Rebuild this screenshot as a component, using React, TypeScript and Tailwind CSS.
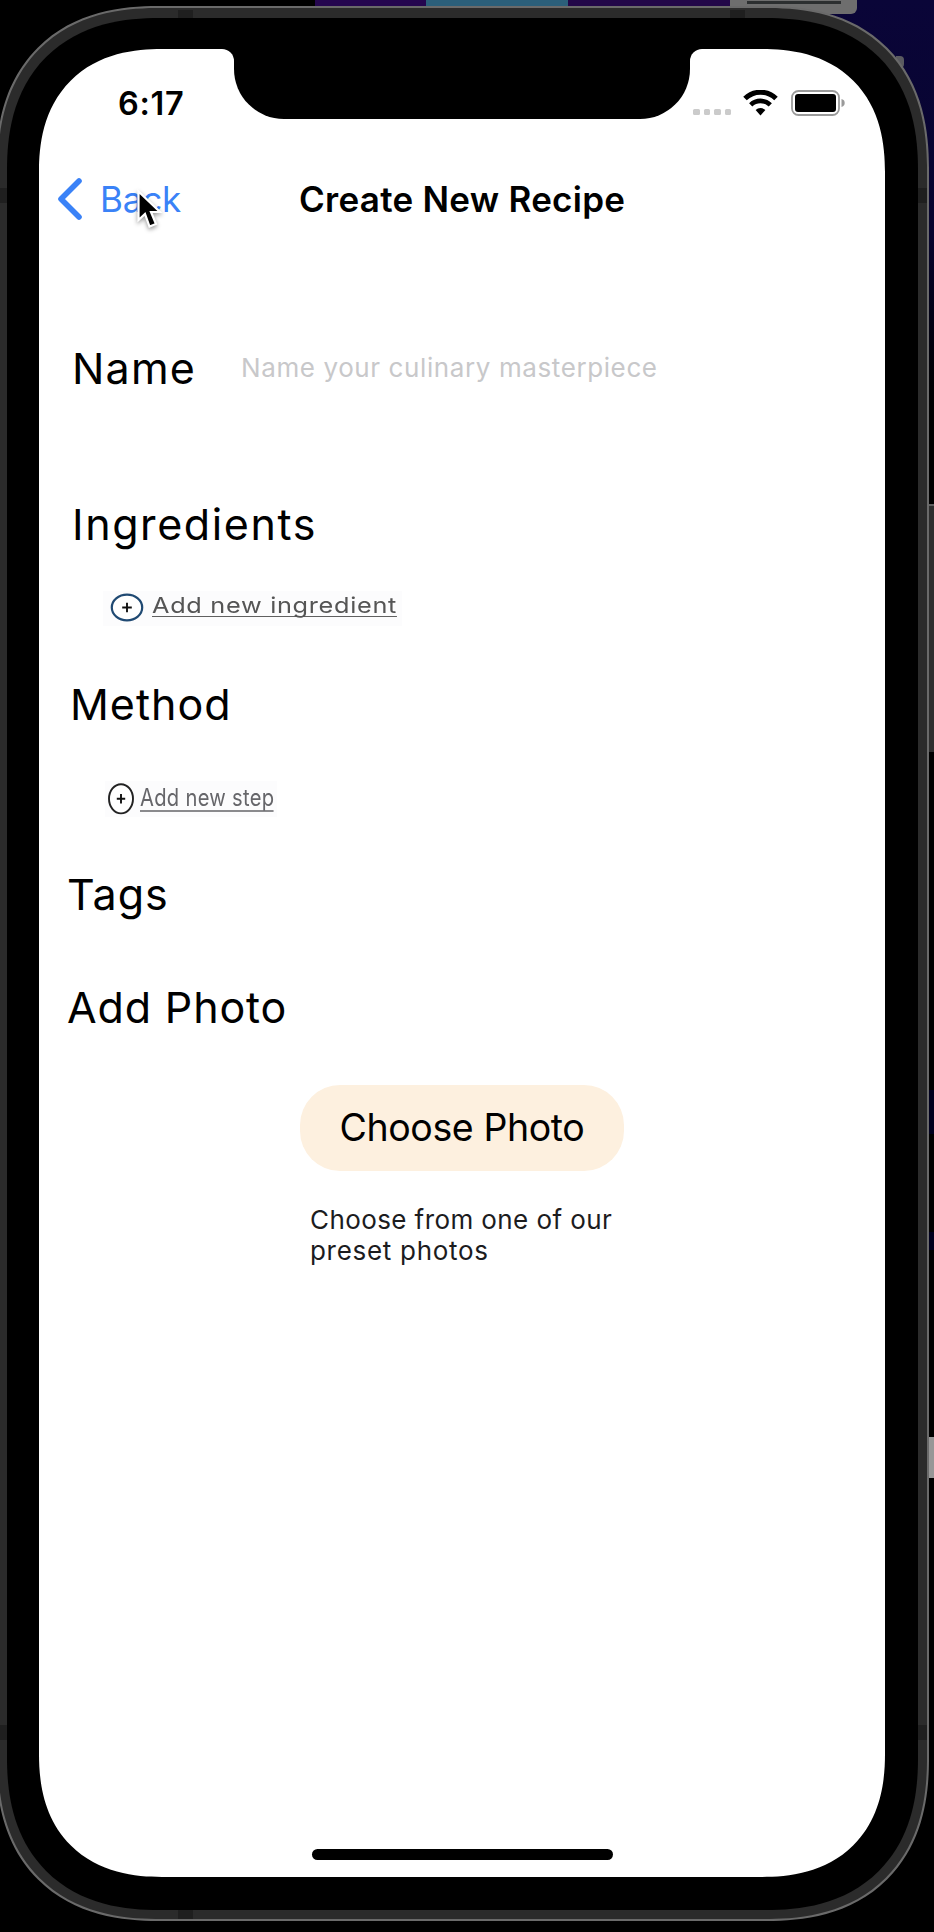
import type { ReactNode } from 'react';

function Wallpaper() {
  return (
    <div className="absolute inset-0 overflow-hidden bg-black">
      <div className="absolute top-0 right-0 h-[470px] w-[120px] bg-linear-to-b from-[#0a0538] via-[#07042e] to-black" />
      <div className="absolute top-0 left-[315px] flex h-2">
        <div className="w-[111px] bg-[#25064f]" />
        <div className="w-[142px] bg-[#2b5f7a]" />
        <div className="w-[170px] bg-[#220748]" />
      </div>
      <div className="absolute top-0 left-[730px] h-[14px] w-[127px] rounded-b-md bg-[#6e6e6e]">
        <div className="mx-auto mt-px h-[3px] w-[94px] bg-[#2c2f30]" />
      </div>
      <div className="absolute top-[56px] left-[896px] h-3 w-2 rounded-r-sm bg-[#5a5a60]" />
      <div className="absolute top-[504px] right-0 h-[248px] w-2 border-t-2 border-[#606060] bg-[#2e2e2e]" />
      <div className="absolute top-[1090px] right-0 h-[44px] w-2 bg-[#00001e]" />
      <div className="absolute top-[1232px] right-0 h-[18px] w-2 bg-[#00001e]" />
      <div className="absolute top-[1437px] right-0 h-[41px] w-2 bg-[#979797]" />
    </div>
  );
}

function AntennaBands() {
  return (
    <>
      <div className="absolute top-[2px] left-[180px] h-[9px] w-[15px] bg-[#1f1f1f]" />
      <div className="absolute top-[2px] left-[732px] h-[9px] w-[15px] bg-[#1f1f1f]" />
      <div className="absolute bottom-0 left-[180px] h-[9px] w-[15px] bg-[#1f1f1f]" />
      <div className="absolute top-[180px] left-0 h-[15px] w-[9px] bg-[#1f1f1f]" />
      <div className="absolute top-[180px] right-0 h-[15px] w-[9px] bg-[#1f1f1f]" />
      <div className="absolute bottom-[179px] left-0 h-[15px] w-[9px] bg-[#1f1f1f]" />
      <div className="absolute bottom-[179px] right-0 h-[15px] w-[9px] bg-[#1f1f1f]" />
    </>
  );
}

function Notch() {
  return (
    <div className="absolute top-0 left-[183px] flex">
      <div className="h-[14px] w-[12px] bg-black">
        <div className="size-full rounded-tr-[12px] bg-white" />
      </div>
      <div className="h-[70px] w-[456px] rounded-b-[50px] bg-black" />
      <div className="h-[14px] w-[12px] bg-black">
        <div className="size-full rounded-tl-[12px] bg-white" />
      </div>
    </div>
  );
}

function StatusBar() {
  return (
    <div className="flex h-[108px] shrink-0 items-center justify-between pr-10 pl-[79px]">
      <span className="pt-0.5 text-[32.5px] font-semibold tracking-[0.7px]">6:17</span>
      <div className="flex h-[26px] items-end">
        <div className="mr-3 flex gap-1 pb-px">
          <i className="size-[6.4px] rounded-[1.5px] bg-[#cbcbcb]" />
          <i className="size-[6.4px] rounded-[1.5px] bg-[#cbcbcb]" />
          <i className="size-[6.4px] rounded-[1.5px] bg-[#cbcbcb]" />
          <i className="size-[6.4px] rounded-[1.5px] bg-[#cbcbcb]" />
        </div>
        <svg className="mr-[13px] h-[26px] w-[35px]" viewBox="0 0 35 26" fill="none" stroke="#000">
          <path d="M2 8.6a22 22 0 0 1 31 0" strokeWidth="5" />
          <path d="M7.7 14.8a14.2 14.2 0 0 1 19.6 0" strokeWidth="4.6" />
          <path d="M12.6 20a7.2 7.2 0 0 1 9.8 0l-4.900 5.400z" fill="#000" stroke="none" />
        </svg>
        <svg className="h-[26px] w-[54px]" viewBox="0 0 54 26" fill="none">
          <rect x="1" y="1" width="47" height="24" rx="6.5" stroke="#9a9a9a" strokeWidth="1.8" />
          <rect x="4" y="4" width="41" height="18" rx="3" fill="#000" />
          <path d="M50.5 9c2.6.8 3.2 2.200 3.200 4s-.6 3.200-3.200 4z" fill="#9a9a9a" />
        </svg>
      </div>
    </div>
  );
}

function NavBar() {
  return (
    <nav className="flex h-[84px] shrink-0 items-center pl-[19px] text-[35px]">
      <svg className="mr-[18px] h-[42px] w-6" viewBox="0 0 24 42" fill="none">
        <path d="M21 3 3 21l18 18" stroke="#3a82f7" strokeWidth="5.6" strokeLinecap="round" strokeLinejoin="round" />
      </svg>
      <a className="w-[199px] tracking-[-0.15px] text-[#3a82f7]">Back</a>
      <h1 className="font-semibold tracking-[0.27px]">Create New Recipe</h1>
    </nav>
  );
}

function Heading({ className, children }: { className: string; children: ReactNode }) {
  return <h2 className={`shrink-0 text-[43px] leading-[52px] ${className}`}>{children}</h2>;
}

function Cursor() {
  return (
    <svg
      className="absolute top-[139px] left-[96px] h-[46px] w-[32px] drop-shadow-[0_2px_2px_rgba(0,0,0,0.4)]"
      viewBox="0 0 32 46"
    >
      <path
        d="M3.500 3.500v28.500l6.500-6 4.500 12.500 6.500-2.500-5-12h9z"
        fill="#000"
        stroke="#fff"
        strokeWidth="2.200"
      />
    </svg>
  );
}

export default function App() {
  return (
    <div className="relative h-[1932px] w-[934px] overflow-hidden bg-black pt-[6px] font-['Inter',sans-serif] text-black">
      <Wallpaper />
      <div className="relative -ml-1 h-[1915px] w-[933px] rounded-[162px] border-2 border-[#6a6a6a] bg-[#2b2b2b] pt-[10px] pr-[9px] pb-[9px] pl-[9px] [corner-shape:superellipse(1.22)]">
        <AntennaBands />
        <div className="relative h-full rounded-[152px] bg-black pt-[31px] pr-[33px] pb-[33px] pl-[32px] [corner-shape:superellipse(1.22)]">
          <div className="relative flex h-full flex-col overflow-hidden rounded-[123px] bg-white [corner-shape:superellipse(1.22)]">
            <StatusBar />
            <NavBar />

            <div className="mt-[101px] ml-[33px] flex h-[52px] shrink-0 items-center">
              <Heading className="w-[169px] tracking-[1.2px]">Name</Heading>
              <span className="pb-px text-[26px] tracking-[0.6px] text-[#c8c8ca]">
                Name your culinary masterpiece
              </span>
            </div>

            <Heading className="mt-[104px] ml-[33px] tracking-[1.6px]">Ingredients</Heading>
            <button className="mt-[41px] ml-16 flex h-[35px] w-[299px] shrink-0 bg-[#fcfcfd] pt-0.5 pl-[7px] text-left">
              <svg className="h-[29px] w-[34px] shrink-0" viewBox="0 0 34 29" fill="none">
                <ellipse cx="17" cy="14.500" rx="15.200" ry="12.800" fill="#fff" stroke="#204a73" strokeWidth="2.200" />
                <path d="M17 9.700v9.600M12.200 14.500h9.600" stroke="#111" strokeWidth="1.900" />
              </svg>
              <span className="ml-[8px] h-[24px] w-[213px] shrink-0 origin-left scale-x-115 border-b border-[#606060] text-[22px] leading-[24px] tracking-[0.6px] whitespace-nowrap text-[#555]">
                Add new ingredient
              </span>
            </button>

            <Heading className="mt-[52px] ml-[31px] tracking-[1px]">Method</Heading>
            <button className="mt-[51px] ml-[66px] flex h-9 w-[172px] shrink-0 bg-[#fcfcfd] pt-px pl-[2px] text-left">
              <svg className="h-[33px] w-[28px] shrink-0" viewBox="0 0 28 33" fill="none">
                <ellipse cx="14" cy="16.800" rx="12" ry="14.600" fill="#fff" stroke="#222" strokeWidth="1.900" />
                <path d="M14 12v9.600M9.800 16.800h8.400" stroke="#111" strokeWidth="1.900" />
              </svg>
              <span className="ml-[5px] h-[30px] w-[159px] shrink-0 origin-left scale-x-84 border-b-2 border-[#8a8a8d] pt-px text-[24px] leading-[29px] tracking-[0.35px] whitespace-nowrap text-[#66666a]">
                Add new step
              </span>
            </button>

            <Heading className="mt-[51px] ml-[28px] tracking-[1px]">Tags</Heading>
            <Heading className="mt-[61px] ml-[28px] tracking-[0.85px]">Add Photo</Heading>

            <button className="mt-[52px] ml-[261px] h-[86px] w-[324px] shrink-0 rounded-[40px] bg-[#fdf0df] text-[37.5px] tracking-[-0.4px]">
              Choose Photo
            </button>
            <p className="mt-[33px] ml-[271px] text-[26px] leading-[31px] text-[#1c1c1e]">
              <span className="block tracking-[0.41px]">Choose from one of our</span>
              <span className="block tracking-[0.7px]">preset photos</span>
            </p>

            <div className="mt-auto mb-[17px] ml-[273px] h-[11px] w-[301px] shrink-0 rounded-full bg-black" />

            <Notch />
            <Cursor />
          </div>
        </div>
      </div>
    </div>
  );
}
